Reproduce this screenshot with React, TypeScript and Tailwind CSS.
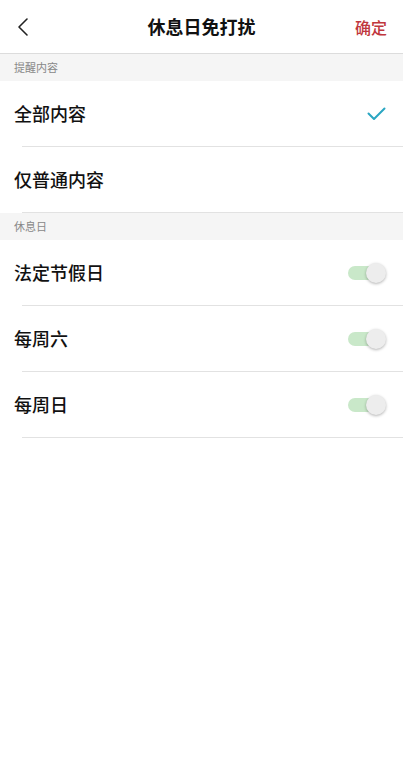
import { useState } from "react";

const font = { fontFamily: '"Noto Sans CJK SC", "Noto Sans", sans-serif' };

function Toggle({ on }: { on: boolean }) {
  return (
    <div className="relative w-[38px] h-[20px] flex items-center">
      <div className={`w-[33px] h-[14px] rounded-full ${on ? "bg-[#c9e8c9]" : "bg-[#e0e0e0]"}`} />
      <div className="absolute right-0 top-0 w-[20px] h-[20px] rounded-full bg-[#ededed] shadow-[0_1px_3px_rgba(0,0,0,0.3)]" />
    </div>
  );
}

function SectionHeader({ title }: { title: string }) {
  return (
    <div className="h-[27px] bg-[#f5f5f5] flex items-center px-[14px] text-[11px] text-[#888]">{title}</div>
  );
}

function Row({ label, right, last }: { label: string; right?: React.ReactNode; last?: boolean }) {
  return (
    <div className="bg-white">
      <div className="h-[65px] flex items-center justify-between pl-[14px] pr-[17px]">
        <span className="text-[18px] font-medium text-[#111]">{label}</span>
        {right}
      </div>
      {!last && <div className="ml-[22px] h-px bg-[#e2e2e2]" />}
    </div>
  );
}

export default function App() {
  const [mode, setMode] = useState<"all" | "normal">("all");
  const days = ["法定节假日", "每周六", "每周日"];

  return (
    <div className="w-[403px] min-h-[773px] bg-white" style={font}>
      <div className="h-[54px] grid grid-cols-[60px_1fr_60px] items-center px-4 border-b border-[#dcdcdc]">
        <svg className="w-[14px] h-[20px] text-[#222]" viewBox="0 0 14 20" fill="none" stroke="currentColor" strokeWidth="1.6">
          <path d="M11 2 L3 10 L11 18" strokeLinejoin="round" strokeLinecap="round" />
        </svg>
        <span className="text-center text-[18px] font-bold text-[#111]">休息日免打扰</span>
        <span className="text-right text-[16px] font-medium text-[#c0373d]">确定</span>
      </div>

      <SectionHeader title="提醒内容" />
      <div onClick={() => setMode("all")}>
        <Row
          label="全部内容"
          right={
            mode === "all" && (
              <svg className="w-[19px] h-[14px] text-[#2aa6c2]" viewBox="0 0 19 14" fill="none" stroke="currentColor" strokeWidth="2">
                <path d="M1.5 6.5 L7 12 L17.5 1.5" strokeLinecap="round" strokeLinejoin="round" />
              </svg>
            )
          }
        />
      </div>
      <div onClick={() => setMode("normal")}>
        <Row label="仅普通内容" last />
      </div>
      <div className="ml-[22px] h-px bg-[#e2e2e2]" />

      <SectionHeader title="休息日" />
      {days.map((d) => (
        <Row key={d} label={d} right={<Toggle on />} />
      ))}
    </div>
  );
}
